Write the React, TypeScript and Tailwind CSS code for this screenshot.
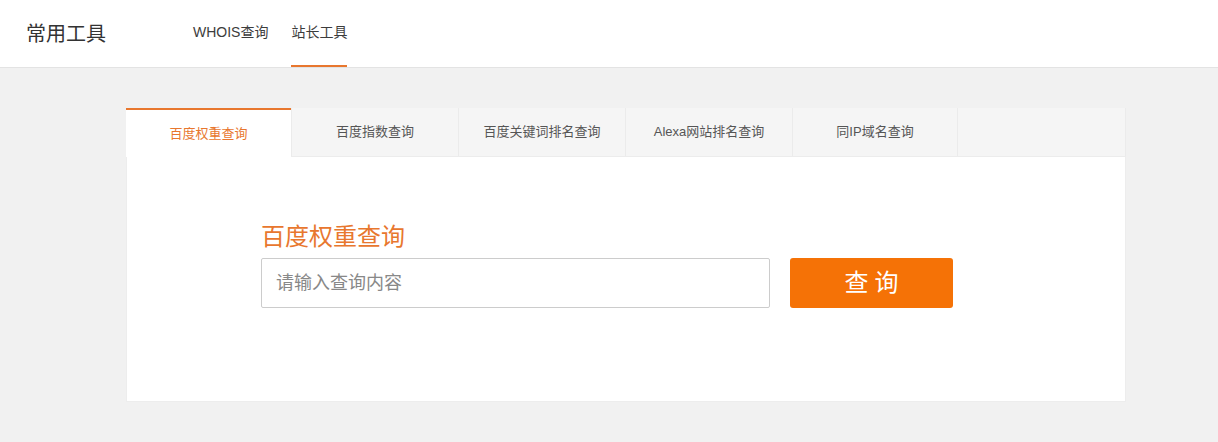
import React from "react";

const tabs = ["百度权重查询", "百度指数查询", "百度关键词排名查询", "Alexa网站排名查询", "同IP域名查询"];
const widths = ["w-[165px]", "w-[167px]", "w-[167px]", "w-[167px]", "w-[165px]"];

export default function App() {
  return (
    <div
      className="w-[1218px] h-[442px] bg-[#f1f1f1] overflow-hidden"
      style={{ fontFamily: '"Liberation Sans", "Noto Sans CJK SC", sans-serif' }}
    >
      <header className="h-[68px] bg-white border-b border-[#e3e3e3] flex items-stretch">
        <div className="pl-[26px] w-[193px] flex items-center text-[20px] text-[#333]">常用工具</div>
        <nav className="flex items-stretch gap-[23px] text-[14px] text-[#3c3c3c]">
          <a className="flex items-center border-b-2 border-transparent">WHOIS查询</a>
          <a className="flex items-center border-b-2 border-[#e8772e]">站长工具</a>
        </nav>
      </header>
      <div className="pt-[40px] pl-[126px]">
        <div className="w-[1000px] bg-white">
          <div className="flex h-[49px] bg-[#f5f5f5] text-[13px] text-[#555]">
            {tabs.map((t, i) => (
              <div
                key={t}
                className={
                  i === 0
                    ? widths[i] + " flex items-center justify-center bg-white border-t-2 border-[#e8772e] text-[#e8772e]"
                    : widths[i] + " flex items-center justify-center border-l border-[#ebebeb] border-b border-b-[#ececec]"
                }
              >
                {t}
              </div>
            ))}
            <div className="flex-1 border-l border-[#ebebeb] border-b border-b-[#ececec] border-r border-r-[#ebebeb]" />
          </div>
          <div className="h-[245px] pt-[65px] pl-[134px] border-x border-b border-[#ededed]">
            <div className="text-[24px] leading-[30px] text-[#e8772e]">百度权重查询</div>
            <div className="mt-[6px] flex gap-[20px]">
              <input
                className="w-[509px] h-[50px] border border-[#cccccc] rounded-[2px] px-[14px] text-[18px] text-[#333] placeholder:text-[#888] outline-none"
                placeholder="请输入查询内容"
              />
              <button className="w-[163px] h-[50px] rounded-[3px] bg-[#f57206] text-white text-[24px] tracking-[6px] pl-[6px]">
                查询
              </button>
            </div>
          </div>
        </div>
      </div>
    </div>
  );
}
